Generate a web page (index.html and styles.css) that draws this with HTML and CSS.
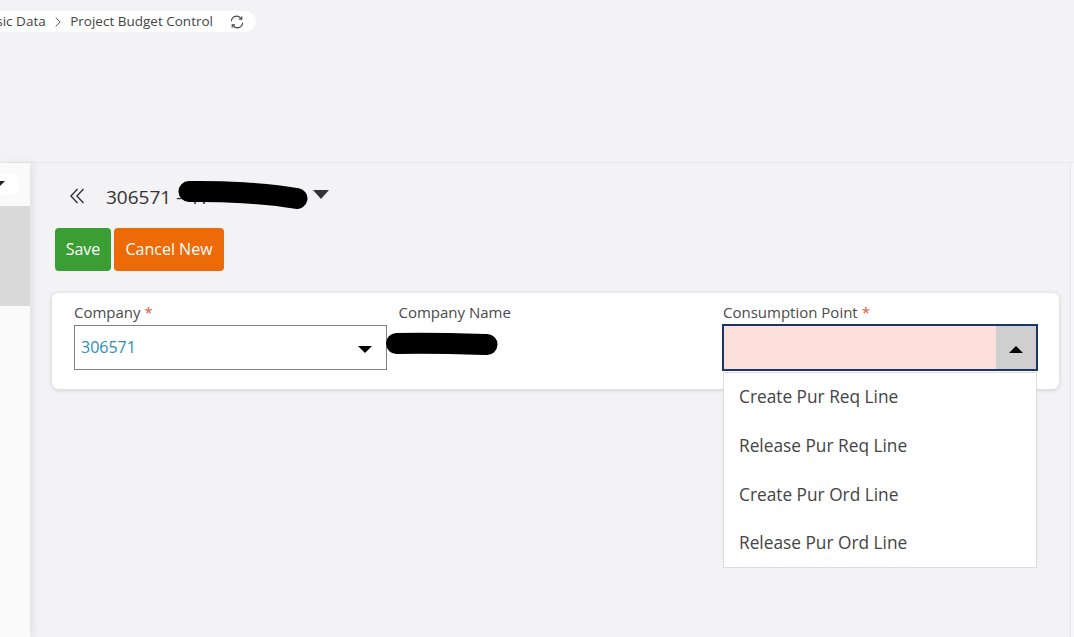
FILE: index.html
```html
<!doctype html>
<html>
<head>
    <title>Project Budget Control</title>
    <link rel="stylesheet" href="styles.css">
</head>

<body>
    <header class="top-bar">
        <nav class="breadcrumb">
            <span class="crumb">sic Data</span>
            <svg class="crumb-sep" width="6" height="10" viewBox="0 0 6 10"><path d="M.7 .7l4.5 4.3-4.5 4.3" fill="none" stroke="#555" stroke-width="1"/></svg>
            <span class="crumb">Project Budget Control</span>
            <svg class="refresh" width="14" height="14" viewBox="0 0 14 14" fill="none" stroke="#444" stroke-width="1.1">
                <path d="M1.4 6.2A5.2 5.2 0 0 1 11 3.6"/>
                <path d="M11.8 1.2v2.9H8.9"/>
                <path d="M12.6 7.8A5.2 5.2 0 0 1 3 10.4"/>
                <path d="M2.2 12.8V9.9h2.9"/>
            </svg>
        </nav>
    </header>

    <div class="workspace">
        <aside class="sidebar">
            <div class="side-search"><span class="side-caret"></span></div>
            <div class="side-active"></div>
        </aside>

        <main class="content">
            <div class="title-row">
                <svg class="back" width="14" height="16" viewBox="0 0 14 16" fill="none" stroke="#333" stroke-width="1.4">
                    <path d="M7.5 1L.9 8l6.6 7"/>
                    <path d="M13.5 1L6.9 8l6.6 7"/>
                </svg>
                <h1 class="title">306571 - 41</h1>
                <svg class="scribble title-scribble" width="136" height="32" viewBox="0 0 136 32">
                    <path d="M13 11.5C45 11 90 13 121 18.5" fill="none" stroke="#000" stroke-width="21" stroke-linecap="round"/>
                </svg>
                <span class="title-caret"></span>
            </div>

            <div class="actions">
                <button class="btn btn-save">Save</button>
                <button class="btn btn-cancel">Cancel New</button>
            </div>

            <section class="card">
                <div class="field">
                    <label class="field-label">Company <span class="req">*</span></label>
                    <div class="select select-closed">
                        <span class="select-value">306571</span>
                        <span class="caret-down"></span>
                    </div>
                </div>

                <div class="field">
                    <label class="field-label">Company Name</label>
                    <svg class="scribble name-scribble" width="114" height="24" viewBox="0 0 114 24">
                        <path d="M10.5 11.5C40 10.5 70 11.5 101 12.5" fill="none" stroke="#000" stroke-width="21" stroke-linecap="round"/>
                    </svg>
                </div>

                <div class="field">
                    <label class="field-label">Consumption Point <span class="req">*</span></label>
                    <div class="select select-open">
                        <span class="select-btn"><span class="caret-up"></span></span>
                    </div>
                    <ul class="dropdown">
                        <li>Create Pur Req Line</li>
                        <li>Release Pur Req Line</li>
                        <li>Create Pur Ord Line</li>
                        <li>Release Pur Ord Line</li>
                    </ul>
                </div>
            </section>
        </main>

        <div class="scroll-rail"></div>
    </div>
</body>
</html>
```

FILE: styles.css
```css
body {
    margin: 0;
    width: 1074px;
    height: 637px;
    overflow: hidden;
    background-color: #f3f2f4;
    font-family: "Open Sans", "Noto Sans", sans-serif;
    color: #444;
}

.top-bar {
    height: 163px;
    box-sizing: border-box;
    border-bottom: 1px solid #e8e7ea;
    padding-top: 11px;
}

.breadcrumb {
    display: flex;
    align-items: center;
    width: 256px;
    height: 21px;
    box-sizing: border-box;
    padding-right: 12px;
    justify-content: flex-end;
    background-color: #fff;
    border-radius: 0 11px 11px 0;
    font-size: 13.5px;
    line-height: 19px;
    white-space: nowrap;
}

.crumb-sep {
    margin: 0 9px 0 9.5px;
    flex-shrink: 0;
}

.refresh {
    margin-left: 17px;
    flex-shrink: 0;
}

.workspace {
    display: flex;
    height: 474px;
}

.sidebar {
    width: 30px;
    flex-shrink: 0;
    background-color: #fafafa;
    box-shadow: 3px 0 8px rgba(0, 0, 0, 0.08);
    padding-top: 11px;
    box-sizing: border-box;
}

.side-search {
    width: 20px;
    height: 21px;
    background-color: #fff;
    border-radius: 0 11px 11px 0;
    display: flex;
    align-items: center;
}

.side-caret {
    width: 0;
    height: 0;
    border-left: 6px solid #222;
    border-top: 6px solid transparent;
    transform: rotate(90deg) translate(-1px, 1px);
}

.side-active {
    height: 100px;
    margin-top: 11px;
    background-color: #d9d9d9;
}

.content {
    flex: 1;
    padding: 0 12px 0 22px;
}

.scroll-rail {
    width: 5px;
    flex-shrink: 0;
    box-sizing: border-box;
    border-left: 1px solid #e8e7ea;
    background-color: #f7f6f8;
}

.title-row {
    position: relative;
    display: flex;
    align-items: center;
    height: 65px;
    padding-left: 18px;
}

.back {
    flex-shrink: 0;
}

.title {
    margin: 3px 0 0 22px;
    width: 207px;
    font-size: 19px;
    font-weight: 500;
    color: #333;
    white-space: nowrap;
}

.scribble {
    position: absolute;
}

.title-scribble {
    left: 124px;
    top: 17px;
}

.title-caret {
    width: 0;
    height: 0;
    border-left: 8px solid transparent;
    border-right: 8px solid transparent;
    border-top: 9px solid #333;
    margin-bottom: 3px;
}

.actions {
    display: flex;
    gap: 3px;
    padding-left: 3px;
}

.btn {
    height: 43px;
    border: none;
    border-radius: 4px;
    color: #fff;
    font-family: inherit;
    font-size: 16px;
    line-height: 20px;
    padding: 0 0 2px;
    cursor: pointer;
}

.btn-save {
    width: 56px;
    background-color: #3a9e34;
}

.btn-cancel {
    width: 110px;
    background-color: #ec6a08;
}

.card {
    display: grid;
    grid-template-columns: repeat(3, 314px);
    column-gap: 10.5px;
    height: 96px;
    box-sizing: border-box;
    margin-top: 22px;
    margin-right: -1px;
    padding: 9px 22px 0;
    background-color: #fff;
    border-radius: 6px;
    box-shadow: 0 1px 5px rgba(0, 0, 0, 0.16);
}

.field {
    position: relative;
}

.field-label {
    display: block;
    font-size: 15px;
    line-height: 20px;
    margin-bottom: 3px;
    color: #4a4a4a;
}

.req {
    color: #e0533f;
}

.select {
    display: flex;
    align-items: center;
    justify-content: space-between;
    height: 45px;
    box-sizing: border-box;
    border: 1px solid #808080;
    padding: 0 14px 2px 6px;
    background-color: #fff;
}

.select-closed {
    margin-right: 1px;
}

.select-value {
    color: #2a8fb5;
    font-size: 16px;
}

.caret-down {
    width: 0;
    height: 0;
    border-left: 7px solid transparent;
    border-right: 7px solid transparent;
    border-top: 7px solid #000;
    margin-top: 5px;
}

.select-open {
    height: 47px;
    margin: -1px -1px 0;
    border: 2px solid #1d3566;
    padding: 0;
    background-color: #fddfdb;
    justify-content: flex-end;
}

.select-btn {
    display: flex;
    align-items: center;
    justify-content: center;
    width: 40px;
    height: 100%;
    background-color: #cfcfcf;
}

.caret-up {
    width: 0;
    height: 0;
    border-left: 7px solid transparent;
    border-right: 7px solid transparent;
    border-bottom: 7px solid #000;
    margin-top: 3px;
}

.name-scribble {
    left: -13px;
    top: 30px;
}

.dropdown {
    position: absolute;
    top: 70px;
    left: 0;
    width: 314px;
    height: 196px;
    box-sizing: border-box;
    margin: 0;
    padding: 0;
    list-style: none;
    background-color: #fff;
    border: 1px solid #dcdcdc;
    z-index: 5;
}

.dropdown li {
    height: 48.75px;
    line-height: 48.75px;
    padding-left: 15px;
    font-size: 17.3px;
    color: #444;
}
```
